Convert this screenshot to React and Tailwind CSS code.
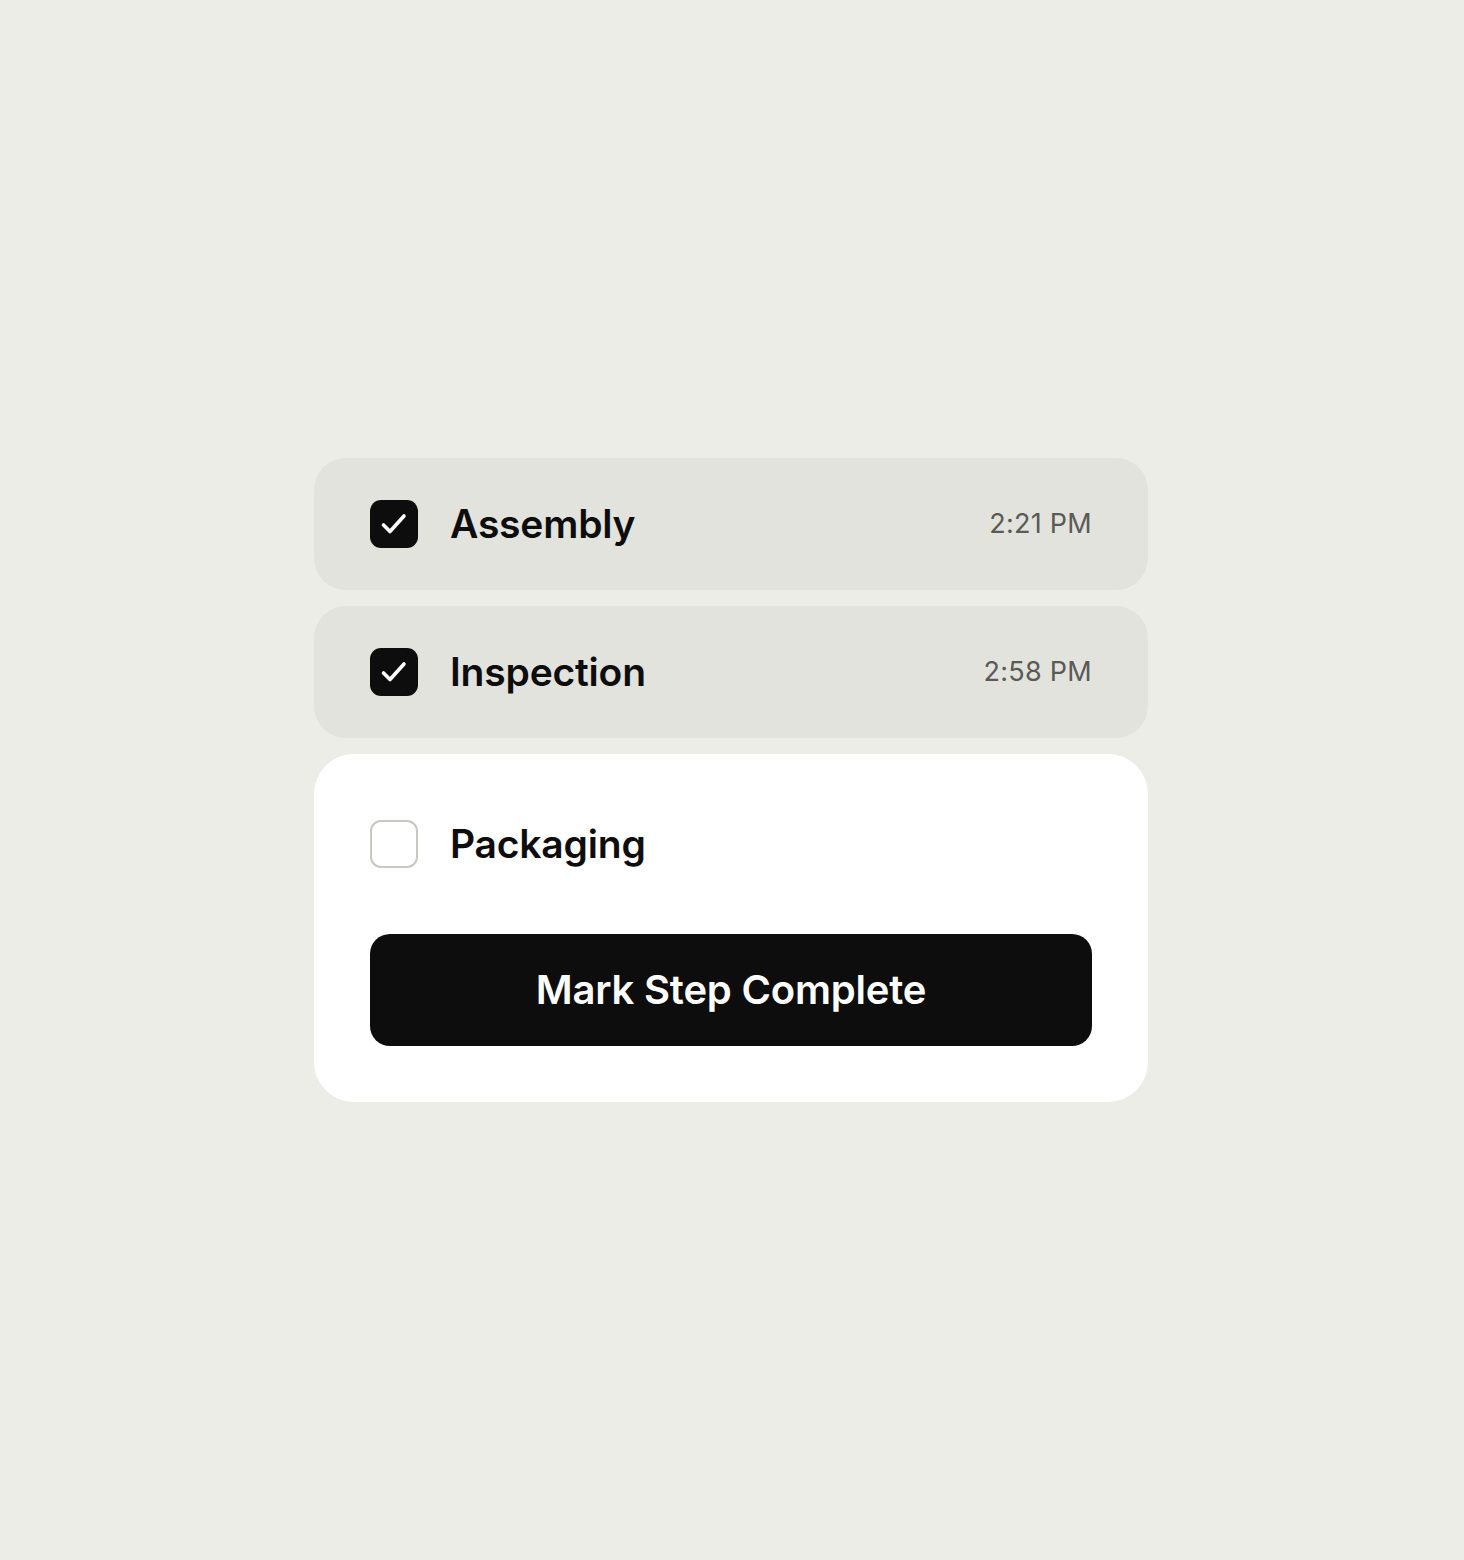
import React, { useState } from 'react';

const STEPS = [
  { id: 'assembly', label: 'Assembly', time: '2:21 PM', done: true },
  { id: 'inspection', label: 'Inspection', time: '2:58 PM', done: true },
];

function CheckBox({ checked }) {
  if (checked) {
    return (
      <div className="w-12 h-12 shrink-0 rounded-[11px] bg-[#0d0d0d]">
        <svg width="48" height="48" viewBox="0 0 48 48" fill="none" stroke="white" strokeWidth="3.6" strokeLinecap="round" strokeLinejoin="round">
          <path d="M13.5 25l6.5 6.5L34 16" />
        </svg>
      </div>
    );
  }
  return <div className="w-12 h-12 shrink-0 rounded-[11px] border-2 border-[#c8c8c2] bg-white" />;
}

export default function App() {
  const [current] = useState('Packaging');

  return (
    <div className="min-h-[1560px] w-full bg-[#ededE8] flex items-center justify-center" style={{ fontFamily: 'Inter, "Noto Sans", sans-serif' }}>
      <div className="w-[834px] flex flex-col gap-4 -ml-[2px]">
        {STEPS.map(step => (
          <div key={step.id} className="h-[132px] rounded-[32px] bg-[#e3e3dd] px-14 flex items-center">
            <CheckBox checked={step.done} />
            <span className="ml-8 text-[39px] font-semibold tracking-[-0.005em] text-[#0d0d0d]">{step.label}</span>
            <span className="ml-auto text-[27px] text-[#5a5a56] tracking-[0.01em]">{step.time}</span>
          </div>
        ))}

        {/* Current step */}
        <div className="rounded-[40px] bg-white p-14 flex flex-col gap-14">
          <div className="h-[68px] flex items-center">
            <CheckBox checked={false} />
            <span className="ml-8 text-[39px] font-semibold tracking-[-0.005em] text-[#0d0d0d]">{current}</span>
          </div>
          <button className="h-[112px] w-full rounded-[20px] bg-[#0d0d0d] text-white text-[40px] font-semibold tracking-[-0.005em]">
            Mark Step Complete
          </button>
        </div>
      </div>
    </div>
  );
}
